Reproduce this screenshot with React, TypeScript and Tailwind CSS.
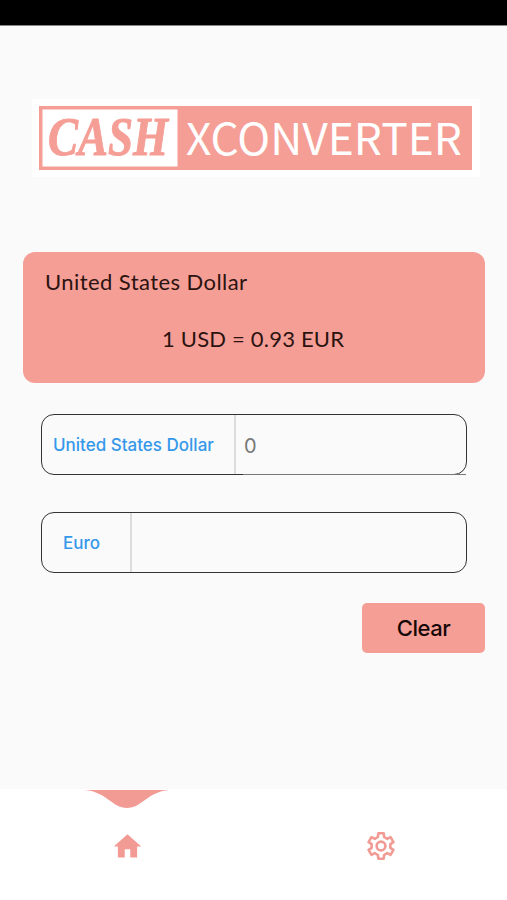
import { MdHome } from "react-icons/md";

function Logo() {
  return (
    <div className="mt-[73px] ml-[32px] h-[78px] w-[448px] bg-white px-[7px] py-[7px]">
      <svg width="433" height="64" viewBox="0 0 433 64" className="block overflow-visible" role="img" aria-label="CASH XCONVERTER">
        <rect width="433" height="64" fill="#f59e96" />
        <rect x="3.5" y="3.5" width="135" height="57" fill="#fff" />
        <text x="9" y="48.5" textLength="120" lengthAdjust="spacingAndGlyphs" fill="#f59e96" stroke="#f59e96" strokeWidth="1" strokeLinejoin="round" fontSize="55" fontWeight="700" fontStyle="italic" fontFamily="'Liberation Serif', serif">CASH</text>
        <text x="147" y="48.5" textLength="276" lengthAdjust="spacingAndGlyphs" fill="#fff" fontSize="44" fontFamily="'Noto Sans CJK SC', sans-serif">XCONVERTER</text>
      </svg>
    </div>
  );
}

function RateCard() {
  return (
    <section className="mx-[23px] mt-[75px] h-[131px] w-[462px] rounded-[12px] bg-[#f59e96] font-['Lato',sans-serif]">
      <svg width="462" height="131" className="block" fill="#2b130f" fontSize="22">
        <text x="22" y="37.5" textLength="202" lengthAdjust="spacing">United States Dollar</text>
        <text x="139" y="94.5" textLength="182" lengthAdjust="spacing">1 USD = 0.93 EUR</text>
      </svg>
    </section>
  );
}

function GearIcon() {
  return (
    <svg width="30" height="30" viewBox="-15 -15 30 30" className="mt-[42px] block" fill="none" stroke="currentColor" strokeWidth="2.6" strokeLinejoin="round">
      <path d="M-3.1-9L-2.7-12.7H2.7L3.1-9L6.24-7.18L9.55-8.86L12.45-3.84L9.34-1.82V1.82L12.45 3.84L9.55 8.86L6.24 7.18L3.1 9L2.7 12.7H-2.7L-3.1 9L-6.24 7.18L-9.55 8.86L-12.45 3.84L-9.34 1.82V-1.82L-12.45-3.84L-9.55-8.86L-6.24-7.18Z" />
      <circle r="4.4" />
    </svg>
  );
}

export default function App() {
  return (
    <main className="flex h-[900px] w-[507px] flex-col overflow-hidden bg-[#fafafa] font-['Inter',sans-serif]">
      <div className="h-[26px] shrink-0 border-b border-[#8a8686] bg-black" />
      <div className="flex h-[763px] shrink-0 flex-col">
        <Logo />
        <RateCard />
        <div className="relative mt-[31px] ml-[41px] flex h-[61px] w-[426px] rounded-[13px] border-[1.5px] border-[#333]">
          <div className="flex w-[194px] items-center border-r-2 border-[#dcdcdc] pt-[2px] pl-[11px] text-[17px] font-medium text-[#3598ea]">
            <span className="whitespace-nowrap">United States Dollar</span>
          </div>
          <div className="flex items-center pt-[2px] pl-[8px] text-[20px] text-[#777]">0</div>
          <div className="absolute right-0 -bottom-px h-px w-[223px] bg-[#777]" />
        </div>
        <div className="mt-[37px] ml-[41px] flex h-[61px] w-[426px] rounded-[13px] border-[1.5px] border-[#333]">
          <div className="flex w-[90px] items-center border-r-2 border-[#dcdcdc] pt-[2px] pl-[21px] text-[17px] font-medium text-[#3598ea]">
            Euro
          </div>
        </div>
        <button className="mt-[30px] ml-[362px] h-[50px] w-[123px] rounded-[5px] bg-[#f59e96] text-[22px] font-medium tracking-[-0.5px] text-[#160806]">
          Clear
        </button>
      </div>
      <nav className="flex h-[111px] bg-white text-[#f29b95]">
        <div className="flex w-[254px] flex-col items-center">
          <svg width="84" height="20" viewBox="0 0 84 20" className="block" fill="#f29b95">
            <path d="M0 1H84C62 3 57 19 42 19S22 3 0 1Z" />
          </svg>
          <MdHome size={33} className="mt-[21px]" />
        </div>
        <div className="flex w-[253px] flex-col items-center">
          <GearIcon />
        </div>
      </nav>
    </main>
  );
}
